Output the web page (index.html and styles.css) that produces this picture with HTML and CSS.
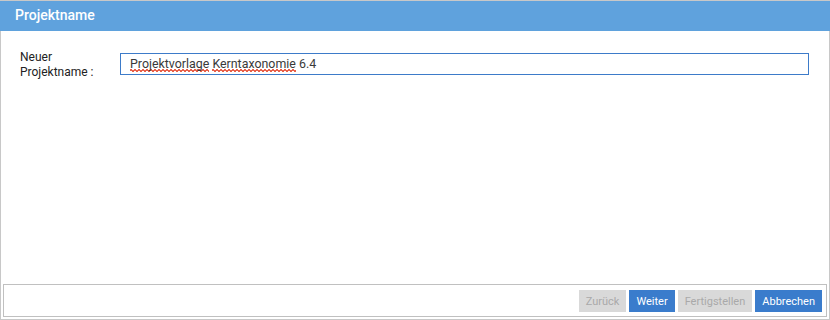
FILE: index.html
```html
<!DOCTYPE html>
<html lang="de">
<head>
    <meta charset="UTF-8">
    <title>Projektname</title>
    <link rel="stylesheet" href="styles.css">
</head>
<body>
    <div class="dialog">
        <div class="dialog-header">Projektname</div>
        <div class="dialog-body">
            <div class="form-row">
                <label class="form-label" for="projname">Neuer<br>Projektname :</label>
                <div class="form-input" id="projname"><span class="misspelled">Projektvorlage</span> <span class="misspelled">Kerntaxonomie</span> 6.4</div>
            </div>
        </div>
        <div class="dialog-footer">
            <button class="btn btn-disabled" disabled>Zurück</button>
            <button class="btn btn-primary">Weiter</button>
            <button class="btn btn-disabled" disabled>Fertigstellen</button>
            <button class="btn btn-primary">Abbrechen</button>
        </div>
    </div>
</body>
</html>
```

FILE: styles.css
```css
body {
    margin: 0;
    padding: 0;
    font-family: Roboto, 'Liberation Sans', sans-serif;
    font-size: 12px;
    color: #222;
    background-color: #fff;
}
.dialog {
    width: 830px;
    height: 320px;
    box-sizing: border-box;
    border-top: 1px solid #c8c8c8;
    display: flex;
    flex-direction: column;
}
.dialog-header {
    height: 30px;
    line-height: 29px;
    padding-left: 15px;
    background-color: #5fa2dd;
    color: #fff;
    font-size: 14px;
    font-weight: 500;
}
.dialog-body {
    flex: 1;
    border-left: 1px solid #c8c8c8;
    border-right: 1px solid #c8c8c8;
    padding: 19px 19px 0 19px;
}
.form-row {
    display: flex;
    align-items: flex-start;
}
.form-label {
    width: 100px;
    line-height: 15px;
    color: #222;
}
.form-input {
    flex: 1;
    height: 20px;
    line-height: 20px;
    margin-top: 3px;
    margin-right: 1px;
    padding-left: 9px;
    border: 1px solid #3d7bc9;
    font-size: 12.4px;
    color: #3a3a3a;
}
.misspelled {
    background-image:
        linear-gradient(45deg, transparent 42%, #e8604a 42%, #e8604a 58%, transparent 58%),
        linear-gradient(-45deg, transparent 42%, #e8604a 42%, #e8604a 58%, transparent 58%);
    background-size: 4px 3px;
    background-position: 0 100%, 2px 100%;
    background-repeat: repeat-x;
    padding-bottom: 1px;
}
.dialog-footer {
    display: flex;
    justify-content: flex-end;
    gap: 3px;
    padding: 4px 7px 4px 0;
    border: 1px solid #c8c8c8;
    border-top: 0;
    position: relative;
}
.dialog-footer::before {
    content: "";
    position: absolute;
    left: 2px;
    right: 2px;
    top: 0;
    bottom: 2px;
    border: 1px solid #c0c0c0;
    pointer-events: none;
}
.btn {
    height: 22px;
    padding: 0 7px;
    margin-top: 2px;
    margin-bottom: 3px;
    border: none;
    font-family: Roboto, 'Liberation Sans', sans-serif;
    font-size: 11px;
    position: relative;
    z-index: 1;
}
.btn-primary {
    background-color: #3a7ccc;
    color: #fff;
    cursor: pointer;
}
.btn-disabled {
    background-color: #d9d9d9;
    color: #a9a9a9;
}
```
